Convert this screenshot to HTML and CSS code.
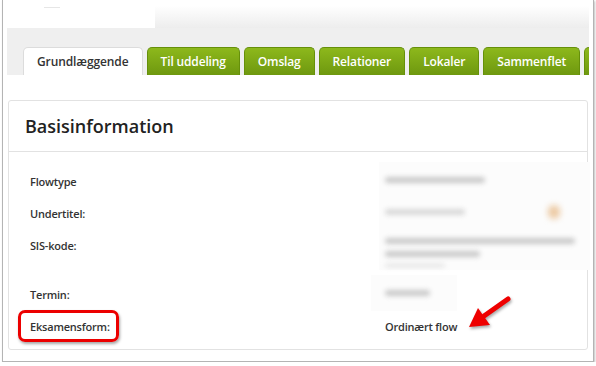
FILE: index.html
```html
<!DOCTYPE html>
<html lang="da">
<head>
    <meta charset="UTF-8">
    <title>Basisinformation</title>
    <link rel="stylesheet" href="styles.css">
</head>
<body>
    <div class="frame">
        <div class="topbar">
            <div class="logo-area"><span class="logo-line"></span></div>
        </div>
        <div class="tabbar">
            <div class="tab active">Grundlæggende</div>
            <div class="tab">Til uddeling</div>
            <div class="tab">Omslag</div>
            <div class="tab">Relationer</div>
            <div class="tab">Lokaler</div>
            <div class="tab">Sammenflet</div>
            <div class="tab tab-more"></div>
        </div>

        <div class="panel">
            <h2 class="panel-title">Basisinformation</h2>
            <div class="fields">
                <div class="field-label">Flowtype</div>
                <div class="field-value">
                    <div class="hidden-box">
                        <span class="blur-bar" style="width: 100px"></span>
                    </div>
                </div>

                <div class="field-label">Undertitel:</div>
                <div class="field-value">
                    <div class="hidden-box split">
                        <span class="blur-bar light" style="width: 80px"></span>
                        <span class="blur-dot"></span>
                    </div>
                </div>

                <div class="field-label">SIS-kode:</div>
                <div class="field-value">
                    <div class="hidden-box stack">
                        <span class="blur-bar" style="width: 190px"></span>
                        <span class="blur-bar" style="width: 95px"></span>
                        <span class="blur-bar dotted" style="width: 60px"></span>
                    </div>
                </div>

                <div class="field-label">Termin:</div>
                <div class="field-value">
                    <div class="hidden-box small">
                        <span class="blur-bar" style="width: 45px"></span>
                    </div>
                </div>

                <div class="field-label">Eksamensform:</div>
                <div class="field-value">Ordinært flow</div>
            </div>
        </div>
    </div>

    <!-- callouts drawn over the screenshot -->
    <div class="callout-box"></div>
    <svg class="callout-arrow" width="64" height="48" viewBox="0 0 64 48">
        <line x1="48" y1="9" x2="24" y2="26" stroke="#ee0000" stroke-width="5" stroke-linecap="round"/>
        <polygon points="9,37 30,35 18,18" fill="#ee0000"/>
    </svg>
</body>
</html>
```

FILE: styles.css
```css
body {
    margin: 0;
    background: #fff;
    font-family: "Open Sans", Arial, sans-serif;
    color: #333;
}
.frame {
    box-sizing: border-box;
    width: 592px;
    height: 362px;
    margin-left: 2px;
    padding: 0 4px;
    border: 1px solid #b4b4b4;
    border-top: none;
    box-shadow: 1px 1px 2px rgba(0, 0, 0, 0.25);
    overflow: hidden;
}
.topbar {
    height: 28px;
    background: linear-gradient(to bottom, #fff 20%, #ededed);
}
.logo-area {
    width: 148px;
    height: 28px;
    background: #fff;
}
.logo-line {
    display: block;
    width: 16px;
    height: 1px;
    margin-left: 37px;
    padding-top: 6px;
    border-bottom: 1px solid #e6e6e6;
}
.tabbar {
    height: 47px;
    background: #efefef;
    display: flex;
    align-items: flex-end;
    gap: 4px;
    padding-left: 16px;
    overflow: hidden;
}
.tab {
    flex-shrink: 0;
    box-sizing: border-box;
    height: 28px;
    line-height: 28px;
    padding: 0 13px;
    font-size: 12px;
    font-weight: 600;
    letter-spacing: -0.15px;
    color: #fff;
    border: 1px solid #66900a;
    border-bottom: none;
    border-radius: 5px 5px 0 0;
    background: linear-gradient(to bottom, #8db81c, #6e980f);
}
.tab.active {
    letter-spacing: -0.1px;
    color: #333;
    background: #fff;
    border-color: #dcdcdc;
}
.tab-more {
    width: 20px;
}
.panel {
    margin: 25px 1px 0;
    height: 250px;
    box-sizing: border-box;
    border: 1px solid #e2e2e2;
    border-radius: 3px;
}
.panel-title {
    margin: 0;
    height: 50px;
    line-height: 50px;
    padding-left: 16px;
    font-size: 18px;
    font-weight: 600;
    color: #222;
    border-bottom: 1px solid #e2e2e2;
}
.fields {
    display: grid;
    grid-template-columns: 355px 1fr;
    grid-template-rows: 32px 32px 49px 32px 32px;
    padding: 14px 0 0 21px;
    font-size: 11px;
    font-weight: 600;
    letter-spacing: -0.2px;
    line-height: 32px;
}
.field-value {
    position: relative;
}
.hidden-box {
    position: absolute;
    left: -6px;
    top: -4px;
    box-sizing: border-box;
    width: 211px;
    height: 36px;
    background: #fcfcfc;
    display: flex;
    align-items: center;
    padding-left: 6px;
    gap: 8px;
}
.hidden-box.split {
    justify-content: space-between;
    padding-right: 30px;
}
.hidden-box.stack {
    flex-direction: column;
    align-items: flex-start;
    justify-content: flex-start;
    gap: 7px;
    padding-top: 12px;
    height: 44px;
}
.hidden-box.small {
    width: 86px;
    left: -14px;
    padding-left: 14px;
}
.blur-bar {
    display: block;
    height: 6px;
    background: #c9c9c9;
    border-radius: 3px;
    filter: blur(2.5px);
}
.blur-bar.light {
    background: #d8d8d8;
}
.blur-bar.dotted {
    height: 3px;
    background: #dedede;
}
.blur-dot {
    width: 12px;
    height: 14px;
    background: #ecc9a2;
    border-radius: 6px;
    filter: blur(3px);
}
.callout-box {
    position: absolute;
    left: 18px;
    top: 310px;
    width: 101px;
    height: 32px;
    box-sizing: border-box;
    border: 3px solid #ec0000;
    border-radius: 7px;
    box-shadow: 1px 2px 3px rgba(0, 0, 0, 0.35);
}
.callout-arrow {
    position: absolute;
    left: 460px;
    top: 290px;
    filter: drop-shadow(1px 2px 1.5px rgba(0, 0, 0, 0.35));
}
```
